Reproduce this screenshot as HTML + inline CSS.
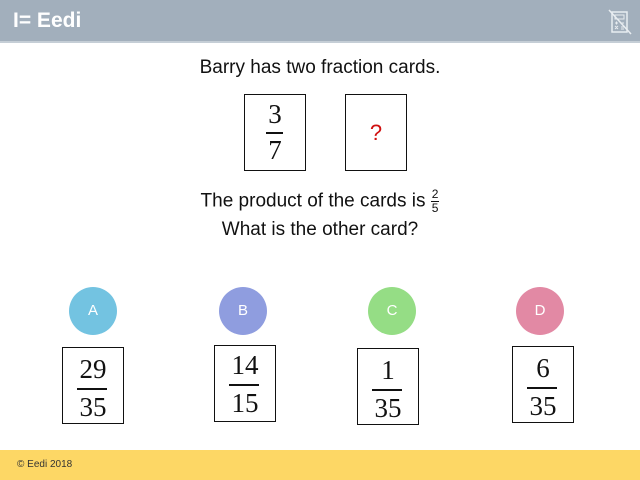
<!DOCTYPE html>
<html><head><style>
body{margin:0;width:640px;height:480px;position:relative;background:#fff;font-family:"Liberation Sans",sans-serif;overflow:hidden}
.hdr{position:absolute;left:0;top:0;width:640px;height:41px;background:#a2afbc;border-bottom:2px solid #c5ced6}
.logo{position:absolute;left:13px;top:9px;color:#fff;font-weight:bold;font-size:21px}
.ftr{position:absolute;left:0;top:450px;width:640px;height:30px;background:#fdd765}
.ftr span{position:absolute;left:17px;top:9px;font-size:10px;color:#333}
.t{position:absolute;left:0;width:640px;text-align:center;font-size:19px;color:#111}
.card{position:absolute;border:1.5px solid #111;box-sizing:border-box;font-family:"Liberation Serif",serif;color:#111}
.fr{position:absolute;left:0;right:0;text-align:center;font-size:27px;line-height:27px}
.bar{position:absolute;height:1.5px;background:#111}
.c{position:absolute;width:48px;height:48px;border-radius:50%;color:#fff;font-size:15px;text-align:center;line-height:48px}
</style></head><body>
<div class="hdr"><div class="logo">I= Eedi</div>
<svg style="position:absolute;left:608px;top:9px" width="24" height="26" viewBox="0 0 24 26"><rect x="4" y="3" width="15" height="20" fill="none" stroke="#e8edf1" stroke-width="1.5"/><rect x="7" y="6" width="9" height="4" fill="none" stroke="#e8edf1"/><path d="M7 14h3M8.5 12.5v3M13 14h3M7 17l3 3M10 17l-3 3M13 18h3M13 20h3" stroke="#e8edf1"/><path d="M1 1L23 25" stroke="#e8edf1" stroke-width="1.5"/></svg></div>
<div class="t" style="top:57px">Barry has two fraction cards.</div>
<div class="card" style="left:244px;top:94px;width:62px;height:77px"><div class="fr" style="top:6px">3</div><div class="bar" style="left:21px;width:17px;top:37px"></div><div class="fr" style="top:42px">7</div></div>
<div class="card" style="left:345px;top:94px;width:62px;height:77px"><div style="position:absolute;left:0;right:0;top:25px;text-align:center;color:#d01010;font-family:'Liberation Sans',sans-serif;font-size:22px">?</div></div>
<div class="t" style="top:188px">The product of the cards is <span style="display:inline-block;vertical-align:middle;font-size:12px;line-height:13px;text-align:center"><span style="display:block;border-bottom:1px solid #111;padding:0 1px">2</span><span style="display:block">5</span></span></div>
<div class="t" style="top:219px">What is the other card?</div>
<div class="c" style="left:69px;top:287px;background:#73c3e1">A</div>
<div class="c" style="left:219px;top:287px;background:#8f9ddf">B</div>
<div class="c" style="left:368px;top:287px;background:#95dd85">C</div>
<div class="c" style="left:516px;top:287px;background:#e289a4">D</div>
<div class="card" style="left:62px;top:347px;width:62px;height:77px"><div class="fr" style="top:8px">29</div><div class="bar" style="left:14px;width:30px;top:40px"></div><div class="fr" style="top:46px">35</div></div>
<div class="card" style="left:214px;top:345px;width:62px;height:77px"><div class="fr" style="top:6px">14</div><div class="bar" style="left:14px;width:30px;top:38px"></div><div class="fr" style="top:44px">15</div></div>
<div class="card" style="left:357px;top:348px;width:62px;height:77px"><div class="fr" style="top:8px">1</div><div class="bar" style="left:14px;width:30px;top:40px"></div><div class="fr" style="top:46px">35</div></div>
<div class="card" style="left:512px;top:346px;width:62px;height:77px"><div class="fr" style="top:8px">6</div><div class="bar" style="left:14px;width:30px;top:40px"></div><div class="fr" style="top:46px">35</div></div>
<div class="ftr"><span>© Eedi 2018</span></div>
</body></html>
